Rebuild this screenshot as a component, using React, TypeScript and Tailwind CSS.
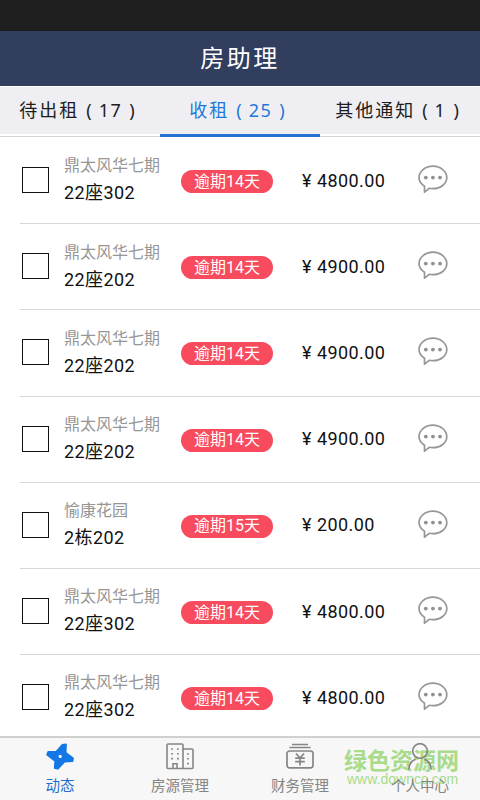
import type { ReactNode } from "react";
import clsx from "clsx";

const rooms = [
  { estate: "鼎太风华七期", room: "22座302", days: 14, rent: "4800.00" },
  { estate: "鼎太风华七期", room: "22座202", days: 14, rent: "4900.00" },
  { estate: "鼎太风华七期", room: "22座202", days: 14, rent: "4900.00" },
  { estate: "鼎太风华七期", room: "22座202", days: 14, rent: "4900.00" },
  { estate: "愉康花园", room: "2栋202", days: 15, rent: "200.00" },
  { estate: "鼎太风华七期", room: "22座302", days: 14, rent: "4800.00" },
  { estate: "鼎太风华七期", room: "22座302", days: 14, rent: "4800.00" },
];

function ChatIcon() {
  return (
    <svg className="mb-[2px] block h-[29px] w-[31px]" viewBox="0 0 31 29" fill="none" stroke="#969696" strokeWidth="1.7">
      <path
        d="M6.500 21.200C3.100 19 1 16 1 12.600 1 6.300 7.200 1.200 14.900 1.200S28.800 6.300 28.800 12.600 22.600 23.700 14.900 23.700c-1.300 0-2.500-.1-3.700-.4L6.500 27.200z"
        strokeLinejoin="round"
      />
      <g fill="#909090" stroke="none">
        <circle cx="7.800" cy="12.600" r="1.900" />
        <circle cx="14.900" cy="12.600" r="1.900" />
        <circle cx="22" cy="12.600" r="1.900" />
      </g>
    </svg>
  );
}

function PinwheelIcon() {
  return (
    <svg className="block h-[27px] w-[28px]" viewBox="0 0 28 27">
      <path
        d="M10.600 8.800L16.500 2 19.800 1.600 19.400 9.800 26.800 15.400 26.300 18 18.500 18.300 11.800 25.400 9 24.900 9.400 17.800 1.400 11.600 2.400 9Z"
        fill="#1477e6"
        stroke="#1477e6"
        strokeWidth="2.200"
        strokeLinejoin="round"
      />
      <circle cx="14.200" cy="13.400" r="1.600" fill="#f7f7f7" />
    </svg>
  );
}

function BuildingIcon() {
  return (
    <svg className="block h-[27px] w-[28px]" viewBox="0 0 28 27" fill="none" stroke="#858585" strokeWidth="1.600">
      <rect x="1" y="1" width="16" height="24.500" rx="1" />
      <path d="M17 6h9a1 1 0 0 1 1 1v17.500a1 1 0 0 1-1 1h-9M7 25.500V20.800h4v4.700" />
      <path d="M5.200 6h1.800M11 6h1.800M5.200 10.800h1.800M11 10.800h1.800M5.200 15.600h1.800M11 15.600h1.800M21 11h1.800M21 15.800h1.800M21 20.600h1.800" />
    </svg>
  );
}

function MoneyIcon() {
  return (
    <svg className="block h-[27px] w-[28px]" viewBox="0 0 28 27" fill="none" stroke="#858585" strokeWidth="1.700">
      <path d="M6 1.500h16M3.500 4.500h21" />
      <rect x="1" y="8" width="26" height="16.800" rx="2.500" />
      <path d="M10 10.500l4 4.500 4-4.500M9.200 15.200h9.600M9.200 18.700h9.600M14 15v7.500" />
    </svg>
  );
}

function PersonIcon() {
  return (
    <svg className="block h-[27px] w-[28px]" viewBox="0 0 28 27" fill="none" stroke="#858585" strokeWidth="1.600">
      <circle cx="14" cy="8" r="7.300" />
      <path d="M2.700 26.500C3.100 20.500 6 17.500 9.700 16.300M18.300 16.300C22 17.500 24.900 20.500 25.300 26.500" />
    </svg>
  );
}

function Tab({ label, count, active }: { label: string; count: number; active?: boolean }) {
  return (
    <div
      className={clsx(
        "flex h-[50px] w-40 flex-col whitespace-nowrap",
        active ? "text-[#1e78da]" : "text-[#1c1c1c]",
      )}
    >
      <div className="flex h-[47px] items-center justify-center bg-[#efeef3] pb-px pr-1 text-[18px] tracking-[2px]">
        <span>{label}</span>
        <span className="ml-[7px] mr-[5px]">(</span>
        <span className="tracking-[1.500px]">{count}</span>
        <span className="ml-[7px]">)</span>
      </div>
      <div className={clsx("h-[3px]", active ? "bg-[#2472d2]" : "border-b border-[#d4d4d6] bg-white")} />
    </div>
  );
}

function NavItem({ label, active, children }: { label: string; active?: boolean; children: ReactNode }) {
  return (
    <div className="flex w-[120px] flex-col items-center pt-[5px]">
      {children}
      <span className={clsx("mt-[5px] text-[14.500px] leading-[20px]", active ? "text-[#1d70cb]" : "text-[#858585]")}>
        {label}
      </span>
    </div>
  );
}

export default function App() {
  return (
    <div className="flex h-[800px] w-[480px] flex-col overflow-hidden bg-white font-['Noto_Sans','Noto_Sans_CJK_SC',sans-serif]">
      <div className="h-[31px] shrink-0 bg-[#1f1f1f]" />
      <header className="flex h-[55px] shrink-0 items-center justify-center bg-[#323e5e] pb-px text-[24px] tracking-[2.500px] text-white">
        房助理
      </header>
      <div className="mt-px flex shrink-0">
        <Tab label="待出租" count={17} />
        <Tab label="收租" count={25} active />
        <Tab label="其他通知" count={1} />
      </div>

      <main className="flex h-[599px] shrink-0 flex-col overflow-hidden pl-5 pt-px font-[Roboto,'Noto_Sans_CJK_SC',sans-serif]">
        {rooms.map((r, i) => (
          <div key={i} className="flex h-[86.200px] shrink-0 items-center border-b border-[#d6d6d6]">
            <div className="mb-px ml-[2px] h-[26px] w-[27px] border border-[#111]" />
            <div className="mb-[1.500px] ml-[15px] w-[117px] whitespace-nowrap">
              <div className="text-[16px] leading-[26px] text-[#969696]">{r.estate}</div>
              <div className="text-[18px] leading-[27px] tracking-[0.400px] text-[#111]">{r.room}</div>
            </div>
            <div className="mt-[2px] flex h-[23px] w-[92px] items-center justify-center rounded-full bg-[#f84b5e] text-[16px] text-white">
              逾期{r.days}天
            </div>
            <div className="mb-px ml-[29px] flex w-[116px] items-center text-[18px] tracking-[0.400px] text-[#111]">
              <span className="mr-[3px] w-[12px]">¥</span>
              {r.rent}
            </div>
            <ChatIcon />
          </div>
        ))}
      </main>

      <nav className="relative h-[64px] shrink-0 border-t-2 border-[#d0d0d0] bg-[#f7f7f7] font-['Noto_Sans_CJK_SC',sans-serif]">
        <div className="absolute left-[344px] top-[7px] whitespace-nowrap text-[#a9db8a]">
          <div className="text-[23px] font-bold leading-[28px]">绿色资源网</div>
          <div className="pl-[3px] font-['Liberation_Sans',sans-serif] text-[14px] leading-[13px]">www.downcc.com</div>
        </div>
        <div className="relative flex">
          <NavItem label="动态" active>
            <PinwheelIcon />
          </NavItem>
          <NavItem label="房源管理">
            <BuildingIcon />
          </NavItem>
          <NavItem label="财务管理">
            <MoneyIcon />
          </NavItem>
          <NavItem label="个人中心">
            <PersonIcon />
          </NavItem>
        </div>
      </nav>
    </div>
  );
}
